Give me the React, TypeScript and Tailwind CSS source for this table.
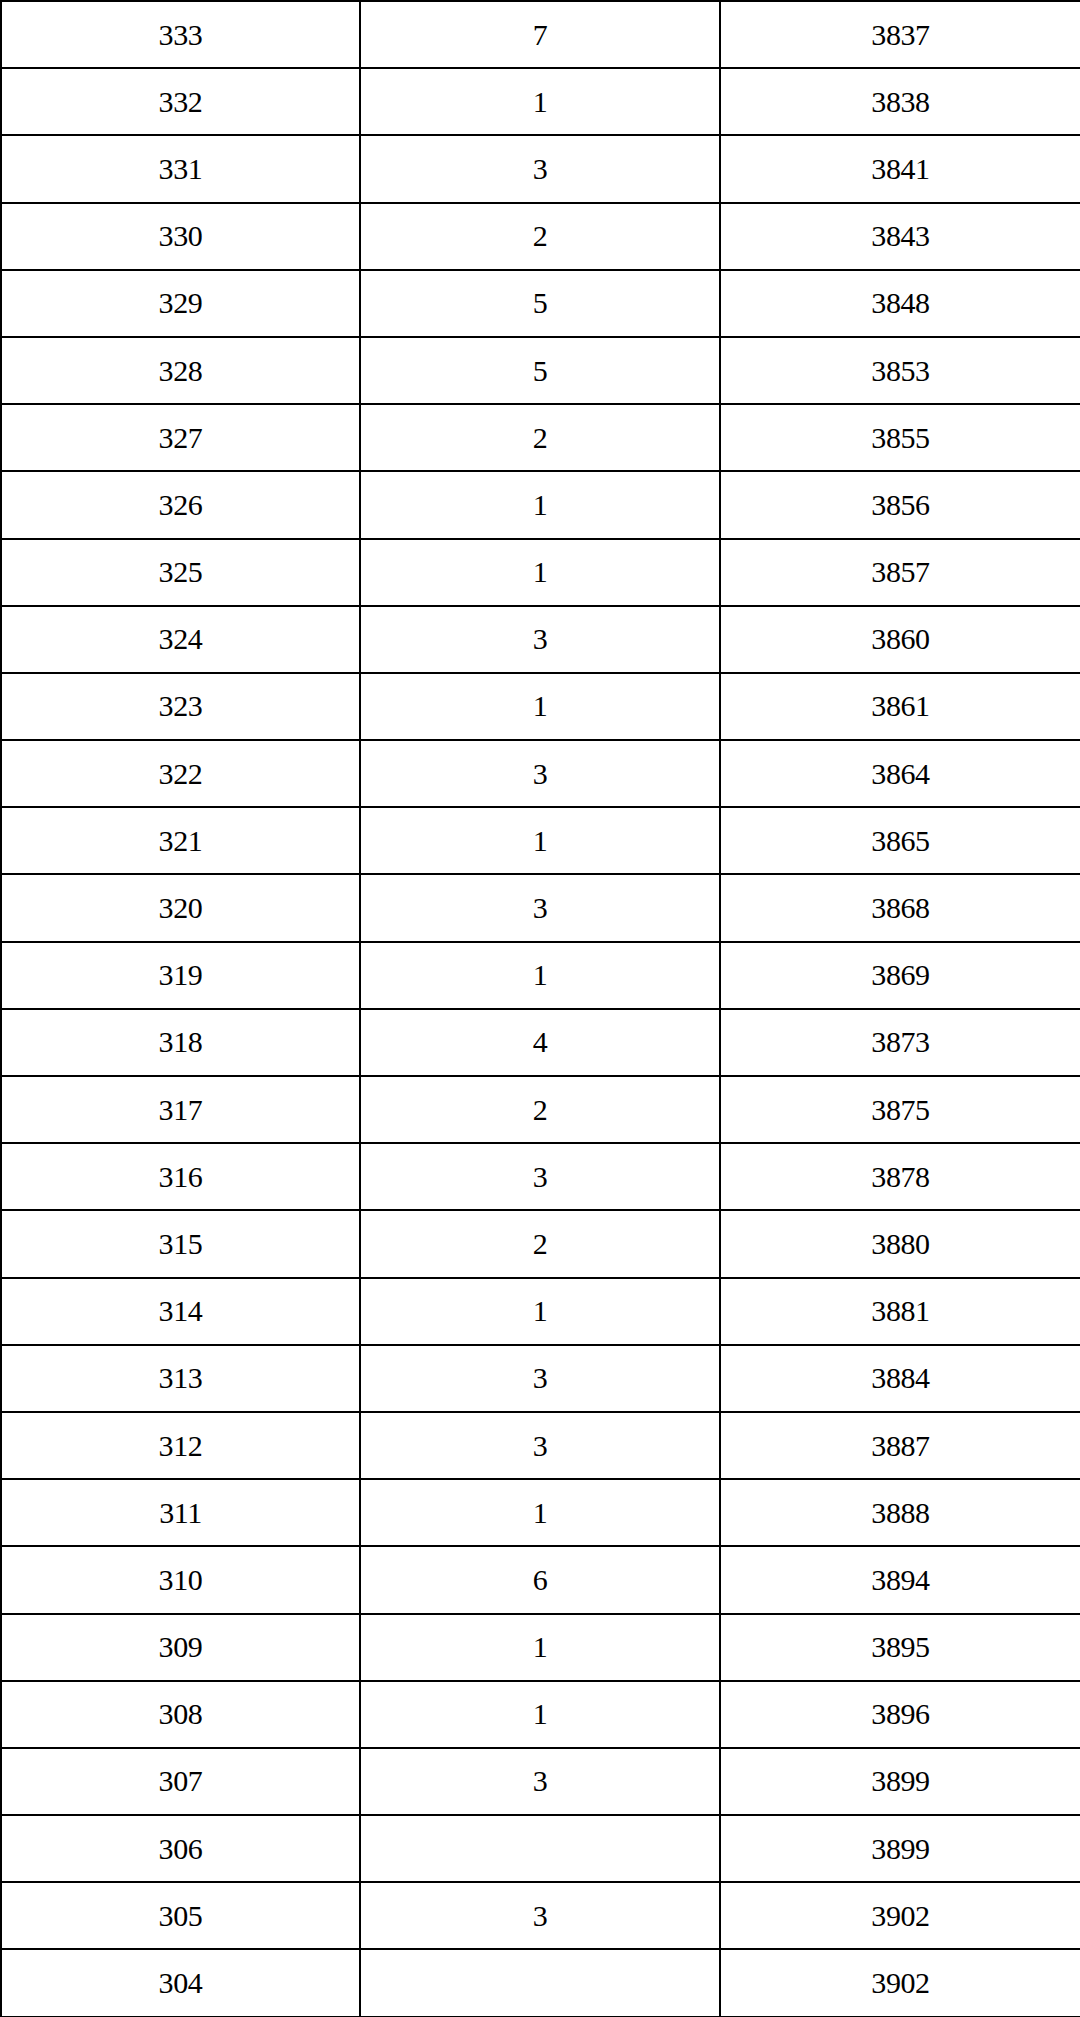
import React from 'react'

type Row = [string, string, string]

const rows: Row[] = [
  ['333', '7', '3837'],
  ['332', '1', '3838'],
  ['331', '3', '3841'],
  ['330', '2', '3843'],
  ['329', '5', '3848'],
  ['328', '5', '3853'],
  ['327', '2', '3855'],
  ['326', '1', '3856'],
  ['325', '1', '3857'],
  ['324', '3', '3860'],
  ['323', '1', '3861'],
  ['322', '3', '3864'],
  ['321', '1', '3865'],
  ['320', '3', '3868'],
  ['319', '1', '3869'],
  ['318', '4', '3873'],
  ['317', '2', '3875'],
  ['316', '3', '3878'],
  ['315', '2', '3880'],
  ['314', '1', '3881'],
  ['313', '3', '3884'],
  ['312', '3', '3887'],
  ['311', '1', '3888'],
  ['310', '6', '3894'],
  ['309', '1', '3895'],
  ['308', '1', '3896'],
  ['307', '3', '3899'],
  ['306', '', '3899'],
  ['305', '3', '3902'],
  ['304', '', '3902'],
]

const App = () => {
  return (
    <div className="w-[1080px] h-[2017px] bg-white">
      <table
        className="w-full h-full border-collapse table-fixed text-black text-[30px] tracking-[-0.4px]"
        style={{ fontFamily: '"Liberation Serif", "Noto Sans CJK SC", serif' }}
      >
        <colgroup>
          <col className="w-[359px]" />
          <col className="w-[360px]" />
          <col className="w-[361px]" />
        </colgroup>
        <tbody>
          {rows.map((r, i) => (
            <tr key={i} className="h-[67.2px]">
              {r.map((c, j) => (
                <td key={j} className="border-2 border-black text-center align-middle p-0 leading-none">
                  {c}
                </td>
              ))}
            </tr>
          ))}
        </tbody>
      </table>
    </div>
  )
}

export default App
